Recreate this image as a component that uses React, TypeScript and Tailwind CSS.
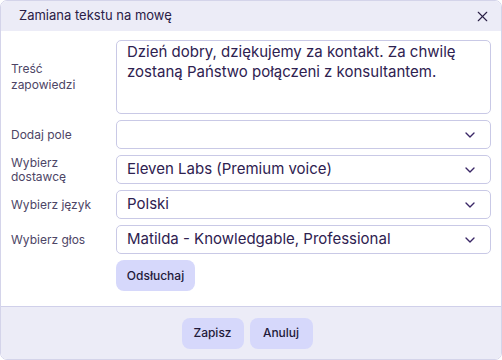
import {ChevronDown, X} from "lucide-react";

const fields = [
    {label: "Dodaj pole", value: ""},
    {label: "Wybierz dostawcę", value: "Eleven Labs (Premium voice)"},
    {label: "Wybierz język", value: "Polski"},
    {label: "Wybierz głos", value: "Matilda - Knowledgable, Professional"},
];

const Select = ({value}: { value: string }) => (
    <div
        className="flex h-[29px] flex-1 items-center justify-between rounded-[5px] border border-[#c9c9e6] bg-white pl-[10px] pr-[12px] text-[15px] text-[#2e2150]">
        <span>{value}</span>
        <ChevronDown size={16} strokeWidth={2} className="text-[#3a2766]"/>
    </div>
);

const App = () => {
    return (
        <div className="h-[360px] w-[502px] bg-white font-['Inter',sans-serif]">
            <div
                className="flex h-full w-full flex-col overflow-hidden rounded-[7px] border border-[#d4d4ea] bg-white">
                <div className="flex h-[30px] items-center justify-between bg-[#ececf7] pl-[18px] pr-[10px]">
                    <div className="text-[13px] text-[#2a2046]">Zamiana tekstu na mowę</div>
                    <X size={17} strokeWidth={1.6} className="text-[#2a2046]"/>
                </div>

                <div className="flex flex-1 flex-col gap-[6px] px-[10px] pt-[9px]">
                    <div className="flex items-center">
                        <div className="w-[105px] text-[12px] leading-[16px] text-[#4d4566]">
                            Treść<br/>zapowiedzi
                        </div>
                        <div
                            className="h-[74px] flex-1 rounded-[5px] border border-[#c9c9e6] px-[10px] pt-[1px] text-[15px] leading-[20px] text-[#2e2150]">
                            Dzień dobry, dziękujemy za kontakt. Za chwilę zostaną Państwo połączeni z konsultantem.
                        </div>
                    </div>

                    {fields.map((f) => (
                        <div key={f.label} className="flex items-center">
                            <div className="w-[105px] text-[12px] leading-[14px] text-[#4d4566]">{f.label}</div>
                            <Select value={f.value}/>
                        </div>
                    ))}

                    <div className="flex">
                        <div className="w-[105px]"/>
                        <button
                            className="h-[31px] w-[79px] rounded-[8px] bg-[#d6d8fb] text-[12px] font-medium text-[#1f1a3a]">
                            Odsłuchaj
                        </button>
                    </div>
                </div>

                <div
                    className="flex h-[53px] items-center justify-center gap-[6px] border-t border-[#d0d0ea] bg-[#ececf7] pr-[8px]">
                    <button
                        className="h-[31px] w-[62px] rounded-[8px] bg-[#d6d8fb] text-[12px] font-medium text-[#1f1a3a]">
                        Zapisz
                    </button>
                    <button
                        className="h-[31px] w-[63px] rounded-[8px] bg-[#d6d8fb] text-[12px] font-medium text-[#1f1a3a]">
                        Anuluj
                    </button>
                </div>
            </div>
        </div>
    );
};

export default App;
